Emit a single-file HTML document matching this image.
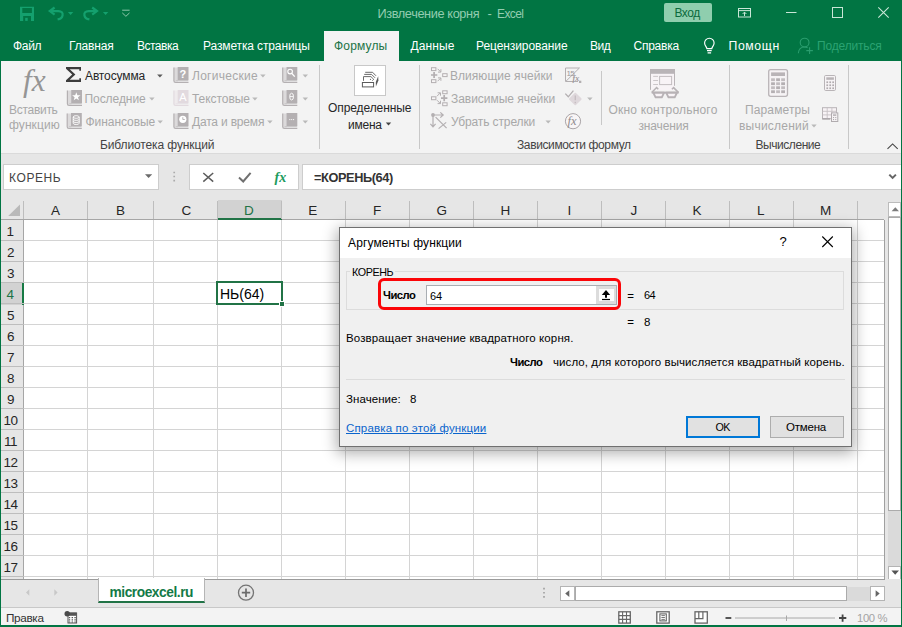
<!DOCTYPE html>
<html lang="ru"><head><meta charset="utf-8"><title>Извлечение корня - Excel</title>
<style>
html,body{margin:0;padding:0}
body{width:902px;height:627px;position:relative;overflow:hidden;background:#fff;font-family:"Liberation Sans",sans-serif}
.r{position:absolute;box-sizing:border-box}
.t{position:absolute;white-space:pre;line-height:30px}
svg{position:absolute;overflow:visible}

</style></head><body>
<div class="r" style="left:0px;top:0px;width:902px;height:61px;background:#017543;"></div>
<div class="r" style="left:664px;top:3px;width:48px;height:19px;background:#8fceae;border-radius:2px;"></div>
<div class="r" style="left:323.5px;top:31px;width:75.0px;height:30px;background:#f3f3f3;"></div>
<div class="r" style="left:0px;top:61px;width:902px;height:92px;background:#f3f3f3;"></div>
<div class="r" style="left:0px;top:153px;width:902px;height:47px;background:#e6e6e6;border-top:1px solid #dadada;"></div>
<div class="r" style="left:319px;top:65px;width:1px;height:84px;background:#c8c8c8;"></div>
<div class="r" style="left:419px;top:65px;width:1px;height:84px;background:#c8c8c8;"></div>
<div class="r" style="left:601px;top:71px;width:1px;height:54px;background:#c8c8c8;"></div>
<div class="r" style="left:729px;top:65px;width:1px;height:84px;background:#c8c8c8;"></div>
<div class="r" style="left:848px;top:65px;width:1px;height:84px;background:#c8c8c8;"></div>
<div class="r" style="left:354.2px;top:65px;width:31.600000000000023px;height:30.700000000000003px;background:#fff;border:1px solid #c8c8c8;"></div>
<div class="r" style="left:3px;top:164px;width:155.6px;height:25.5px;background:#fff;border:1px solid #cdcdcd;"></div>
<div class="r" style="left:189px;top:164px;width:110px;height:25.5px;background:#fff;border:1px solid #cdcdcd;"></div>
<div class="r" style="left:302.4px;top:164px;width:598.6px;height:25.5px;background:#fff;border:1px solid #cdcdcd;border-right:none;"></div>
<div class="r" style="left:0px;top:200px;width:902px;height:20px;background:#e6e6e6;"></div>
<div class="r" style="left:1px;top:219px;width:884px;height:1px;background:#a6a6a6;"></div>
<div class="r" style="left:217.5px;top:200px;width:64.0px;height:19.5px;background:#d2d2d2;border-bottom:2px solid #217346;"></div>
<div class="r" style="left:23px;top:201px;width:1px;height:18px;background:#bdbdbd;"></div>
<div class="r" style="left:87px;top:201px;width:1px;height:18px;background:#bdbdbd;"></div>
<div class="r" style="left:153px;top:201px;width:1px;height:18px;background:#bdbdbd;"></div>
<div class="r" style="left:217px;top:201px;width:1px;height:18px;background:#bdbdbd;"></div>
<div class="r" style="left:281px;top:201px;width:1px;height:18px;background:#bdbdbd;"></div>
<div class="r" style="left:345px;top:201px;width:1px;height:18px;background:#bdbdbd;"></div>
<div class="r" style="left:409px;top:201px;width:1px;height:18px;background:#bdbdbd;"></div>
<div class="r" style="left:473px;top:201px;width:1px;height:18px;background:#bdbdbd;"></div>
<div class="r" style="left:537px;top:201px;width:1px;height:18px;background:#bdbdbd;"></div>
<div class="r" style="left:601px;top:201px;width:1px;height:18px;background:#bdbdbd;"></div>
<div class="r" style="left:665px;top:201px;width:1px;height:18px;background:#bdbdbd;"></div>
<div class="r" style="left:729px;top:201px;width:1px;height:18px;background:#bdbdbd;"></div>
<div class="r" style="left:793px;top:201px;width:1px;height:18px;background:#bdbdbd;"></div>
<div class="r" style="left:857px;top:201px;width:1px;height:18px;background:#bdbdbd;"></div>
<div class="r" style="left:1px;top:220px;width:23px;height:359px;background:#e6e6e6;border-right:1px solid #a6a6a6;"></div>
<div class="r" style="left:1px;top:282.5px;width:23px;height:22.0px;background:#d2d2d2;border-right:2px solid #177a45;"></div>
<div class="r" style="left:87px;top:220px;width:1px;height:359px;background:#d4d4d4;"></div>
<div class="r" style="left:153px;top:220px;width:1px;height:359px;background:#d4d4d4;"></div>
<div class="r" style="left:217px;top:220px;width:1px;height:359px;background:#d4d4d4;"></div>
<div class="r" style="left:281px;top:220px;width:1px;height:359px;background:#d4d4d4;"></div>
<div class="r" style="left:345px;top:220px;width:1px;height:359px;background:#d4d4d4;"></div>
<div class="r" style="left:409px;top:220px;width:1px;height:359px;background:#d4d4d4;"></div>
<div class="r" style="left:473px;top:220px;width:1px;height:359px;background:#d4d4d4;"></div>
<div class="r" style="left:537px;top:220px;width:1px;height:359px;background:#d4d4d4;"></div>
<div class="r" style="left:601px;top:220px;width:1px;height:359px;background:#d4d4d4;"></div>
<div class="r" style="left:665px;top:220px;width:1px;height:359px;background:#d4d4d4;"></div>
<div class="r" style="left:729px;top:220px;width:1px;height:359px;background:#d4d4d4;"></div>
<div class="r" style="left:793px;top:220px;width:1px;height:359px;background:#d4d4d4;"></div>
<div class="r" style="left:857px;top:220px;width:1px;height:359px;background:#d4d4d4;"></div>
<div class="r" style="left:1px;top:240px;width:23px;height:1px;background:#bdbdbd;"></div>
<div class="r" style="left:24px;top:240px;width:860px;height:1px;background:#d4d4d4;"></div>
<div class="r" style="left:1px;top:261px;width:23px;height:1px;background:#bdbdbd;"></div>
<div class="r" style="left:24px;top:261px;width:860px;height:1px;background:#d4d4d4;"></div>
<div class="r" style="left:1px;top:282px;width:23px;height:1px;background:#bdbdbd;"></div>
<div class="r" style="left:24px;top:282px;width:860px;height:1px;background:#d4d4d4;"></div>
<div class="r" style="left:1px;top:303px;width:23px;height:1px;background:#bdbdbd;"></div>
<div class="r" style="left:24px;top:303px;width:860px;height:1px;background:#d4d4d4;"></div>
<div class="r" style="left:1px;top:324px;width:23px;height:1px;background:#bdbdbd;"></div>
<div class="r" style="left:24px;top:324px;width:860px;height:1px;background:#d4d4d4;"></div>
<div class="r" style="left:1px;top:345px;width:23px;height:1px;background:#bdbdbd;"></div>
<div class="r" style="left:24px;top:345px;width:860px;height:1px;background:#d4d4d4;"></div>
<div class="r" style="left:1px;top:366px;width:23px;height:1px;background:#bdbdbd;"></div>
<div class="r" style="left:24px;top:366px;width:860px;height:1px;background:#d4d4d4;"></div>
<div class="r" style="left:1px;top:387px;width:23px;height:1px;background:#bdbdbd;"></div>
<div class="r" style="left:24px;top:387px;width:860px;height:1px;background:#d4d4d4;"></div>
<div class="r" style="left:1px;top:408px;width:23px;height:1px;background:#bdbdbd;"></div>
<div class="r" style="left:24px;top:408px;width:860px;height:1px;background:#d4d4d4;"></div>
<div class="r" style="left:1px;top:429px;width:23px;height:1px;background:#bdbdbd;"></div>
<div class="r" style="left:24px;top:429px;width:860px;height:1px;background:#d4d4d4;"></div>
<div class="r" style="left:1px;top:450px;width:23px;height:1px;background:#bdbdbd;"></div>
<div class="r" style="left:24px;top:450px;width:860px;height:1px;background:#d4d4d4;"></div>
<div class="r" style="left:1px;top:471px;width:23px;height:1px;background:#bdbdbd;"></div>
<div class="r" style="left:24px;top:471px;width:860px;height:1px;background:#d4d4d4;"></div>
<div class="r" style="left:1px;top:492px;width:23px;height:1px;background:#bdbdbd;"></div>
<div class="r" style="left:24px;top:492px;width:860px;height:1px;background:#d4d4d4;"></div>
<div class="r" style="left:1px;top:513px;width:23px;height:1px;background:#bdbdbd;"></div>
<div class="r" style="left:24px;top:513px;width:860px;height:1px;background:#d4d4d4;"></div>
<div class="r" style="left:1px;top:534px;width:23px;height:1px;background:#bdbdbd;"></div>
<div class="r" style="left:24px;top:534px;width:860px;height:1px;background:#d4d4d4;"></div>
<div class="r" style="left:1px;top:555px;width:23px;height:1px;background:#bdbdbd;"></div>
<div class="r" style="left:24px;top:555px;width:860px;height:1px;background:#d4d4d4;"></div>
<div class="r" style="left:1px;top:576px;width:23px;height:1px;background:#bdbdbd;"></div>
<div class="r" style="left:24px;top:576px;width:860px;height:1px;background:#d4d4d4;"></div>
<div class="r" style="left:216px;top:281px;width:67px;height:24px;border:2px solid #217346;background:#fff;"></div>
<div class="r" style="left:279px;top:301px;width:6px;height:6px;background:#217346;border:1px solid #fff;"></div>
<div class="r" style="left:884px;top:200px;width:18px;height:379px;background:#e6e6e6;"></div>
<div class="r" style="left:884px;top:220px;width:1px;height:359px;background:#a0a0a0;"></div>
<div class="r" style="left:888px;top:202px;width:13px;height:14.5px;background:#fff;border:1px solid #bcbcbc;"></div>
<div class="r" style="left:888px;top:217px;width:13px;height:294px;background:#fff;border:1px solid #ababab;"></div>
<div class="r" style="left:888px;top:511px;width:13px;height:54.5px;background:#dadada;"></div>
<div class="r" style="left:888px;top:565.5px;width:13px;height:14.0px;background:#fff;border:1px solid #b4b4b4;"></div>
<div class="r" style="left:0px;top:579px;width:902px;height:28px;background:#e6e6e6;border-top:1px solid #9b9b9b;"></div>
<div class="r" style="left:885px;top:579px;width:17px;height:1px;background:#e6e6e6;"></div>
<div class="r" style="left:98px;top:578.4px;width:107px;height:25.100000000000023px;background:#fff;border-bottom:2px solid #217346;border-left:1px solid #b5b5b5;border-right:1px solid #b5b5b5;"></div>
<div class="r" style="left:560.3px;top:586.3px;width:14.5px;height:14.400000000000091px;background:#fff;border:1px solid #b4b4b4;"></div>
<div class="r" style="left:575px;top:586.3px;width:272px;height:14.400000000000091px;background:#fff;border:1px solid #ababab;"></div>
<div class="r" style="left:847px;top:587px;width:23px;height:13.5px;background:#dadada;"></div>
<div class="r" style="left:870.2px;top:586.3px;width:14.599999999999909px;height:14.400000000000091px;background:#fff;border:1px solid #b4b4b4;"></div>
<div class="r" style="left:0px;top:607px;width:902px;height:20px;background:#f3f3f3;border-top:1px solid #c8c8c8;"></div>
<div class="r" style="left:0px;top:0px;width:1.3px;height:627px;background:#017543;"></div>
<div class="r" style="left:900.7px;top:0px;width:1.2999999999999545px;height:627px;background:#017543;"></div>
<div class="r" style="left:0px;top:625.2px;width:902px;height:1.7999999999999545px;background:#017543;"></div>
<svg width="902" height="627" viewBox="0 0 902 627" style="left:0;top:0"><path fill-rule="evenodd" d="M20 6.8H34V20.9H20ZM22.3 8.1V13H31.9V8.1ZM23.2 16V20.9H31V16Z" fill="#14a06e"/>
<rect x="25.2" y="17.8" width="2.5" height="3.1" fill="#14a06e"/>
<path d="M54.6 7.5L49.8 11.1L54.6 14.7" fill="none" stroke="#14a06e" stroke-width="2.2"/>
<path d="M50.4 11.1H58.4C61.6 11.1 63 13 62.6 15.2C62.2 17.6 60 19 57.6 19.4" fill="none" stroke="#14a06e" stroke-width="2.2"/>
<path d="M67.9 12.1H73.3L70.6 15Z" fill="#14a06e"/>
<path d="M92.2 7.5L97 11.1L92.2 14.7" fill="none" stroke="#14a06e" stroke-width="2.2"/>
<path d="M96.4 11.1H88.6C85.4 11.1 84 13 84.4 15.2C84.8 17.6 87 19 89.4 19.4" fill="none" stroke="#14a06e" stroke-width="2.2"/>
<path d="M102.9 12.1H108.3L105.6 15Z" fill="#14a06e"/>
<path d="M122.2 10.2H129.6" stroke="#8fc8ab" stroke-width="1" fill="none"/>
<path d="M122.3 12.9L125.9 16.3L129.5 12.9" stroke="#8fc8ab" stroke-width="1" fill="none"/>
<rect x="738.5" y="8.5" width="12" height="8.5" fill="none" stroke="#c9e6d7" stroke-width="1"/>
<path d="M738.5 10.6H750.5" stroke="#c9e6d7" stroke-width="1"/>
<path d="M744.5 16V12.2M742.6 14L744.5 12.1L746.4 14" stroke="#c9e6d7" stroke-width="1" fill="none"/>
<path d="M786 12.5H796.5" stroke="#c9e6d7" stroke-width="1"/>
<rect x="832.5" y="7.5" width="10" height="10" fill="none" stroke="#c9e6d7" stroke-width="1"/>
<path d="M878.3 7.3L888.7 17.7M888.7 7.3L878.3 17.7" stroke="#c9e6d7" stroke-width="1.1"/>
<path d="M706.9 48.6C706.6 46.6 704.6 45.6 704.6 43A4.75 4.75 0 0 1 714.1 43C714.1 45.6 712.1 46.6 711.8 48.6Z" fill="none" stroke="#fff" stroke-width="1.15"/>
<path d="M707 50.7H711.7M707.6 52.9H711.1" stroke="#fff" stroke-width="1.2"/>
<circle cx="804.6" cy="42.6" r="4.4" fill="none" stroke="#2a9d6e" stroke-width="1.1"/>
<path d="M798.3 53.3C798.6 49.3 801.3 47 804.6 47C806 47 807 47.4 807.6 47.8" fill="none" stroke="#2a9d6e" stroke-width="1.1"/>
<path d="M806.3 50.6H812.9M809.6 47.3V53.9" stroke="#2a9d6e" stroke-width="1.1"/>
<path d="M66 67H81V70.7H79.3V69.2H69.7L75.4 74.5L69.7 79.8H79.3V78.3H81V82H66V80.2L72.2 74.5L66 68.8Z" fill="#3c3c3c"/>
<path d="M157.1 74.4H162.7L159.9 77.5Z" fill="#5a5a5a"/>
<path d="M149.2 97.6H154.6L151.89999999999998 100.5Z" fill="#b9b9b9"/>
<path d="M157.5 120.6H162.9L160.2 123.5Z" fill="#b9b9b9"/>
<path d="M260.2 74.6H265.59999999999997L262.9 77.5Z" fill="#b9b9b9"/>
<path d="M252.2 97.6H257.59999999999997L254.89999999999998 100.5Z" fill="#b9b9b9"/>
<path d="M267.2 120.6H272.59999999999997L269.9 123.5Z" fill="#b9b9b9"/>
<path d="M302.6 74.6H308.0L305.3 77.5Z" fill="#b9b9b9"/>
<path d="M302.6 97.6H308.0L305.3 100.5Z" fill="#b9b9b9"/>
<path d="M302.6 120.6H308.0L305.3 123.5Z" fill="#b9b9b9"/>
<path d="M545.5 120.6H550.9L548.2 123.5Z" fill="#b9b9b9"/>
<path d="M587.2 97.6H592.6L589.9000000000001 100.5Z" fill="#b9b9b9"/>
<path d="M385.8 122.6H391.2L388.5 125.5Z" fill="#444"/>
<path d="M811.3 124.6H816.6999999999999L814.0 127.5Z" fill="#b9b9b9"/>
<rect x="67.5" y="90.5" width="4" height="14" fill="#dcdadb"/>
<path d="M67.4 90.6V103.8Q67.4 105.4 69.1 105.4H82.0" fill="none" stroke="#b4b0b2" stroke-width="1.2"/>
<path d="M69.3 103.6H81.5" fill="none" stroke="#b4b0b2" stroke-width="0.8" opacity="0.6"/>
<rect x="71.2" y="90" width="10.8" height="13.4" fill="#b4b0b2"/>
<path d="M76.3 92.3L77.4 95.3H80.5L78 97.2L78.9 100.3L76.3 98.4L73.7 100.3L74.6 97.2L72.1 95.3H75.2Z" fill="#fff"/>
<rect x="67.3" y="113.5" width="4" height="14" fill="#dcdadb"/>
<path d="M67.2 113.6V126.8Q67.2 128.4 68.89999999999999 128.4H81.8" fill="none" stroke="#b4b0b2" stroke-width="1.2"/>
<path d="M69.1 126.6H81.3" fill="none" stroke="#b4b0b2" stroke-width="0.8" opacity="0.6"/>
<rect x="71.0" y="113" width="10.8" height="13.4" fill="#b4b0b2"/>
<g fill="none" stroke="#fff" stroke-width="0.9"><ellipse cx="76.2" cy="117" rx="3" ry="1.3"/><path d="M73.2 117V123.2A3 1.3 0 0 0 79.2 123.2V117M73.2 119.1A3 1.3 0 0 0 79.2 119.1M73.2 121.2A3 1.3 0 0 0 79.2 121.2"/></g>
<rect x="174" y="67.5" width="4" height="14" fill="#dcdadb"/>
<path d="M173.9 67.6V80.8Q173.9 82.4 175.6 82.4H188.5" fill="none" stroke="#b4b0b2" stroke-width="1.2"/>
<path d="M175.8 80.6H188" fill="none" stroke="#b4b0b2" stroke-width="0.8" opacity="0.6"/>
<rect x="177.7" y="67" width="10.8" height="13.4" fill="#b4b0b2"/>
<text x="182.8" y="78.2" font-family="Liberation Sans, sans-serif" font-size="11" font-weight="700" fill="#fff" text-anchor="middle">?</text>
<rect x="174" y="90.5" width="4" height="14" fill="#efebed"/>
<path d="M173.9 90.6V103.8Q173.9 105.4 175.6 105.4H188.5" fill="none" stroke="#e2dadf" stroke-width="1.2"/>
<path d="M175.8 103.6H188" fill="none" stroke="#e2dadf" stroke-width="0.8" opacity="0.6"/>
<rect x="177.7" y="90" width="10.8" height="13.4" fill="#e2dadf"/>
<text x="182.8" y="101.3" font-family="Liberation Sans, sans-serif" font-size="11" fill="#fff" text-anchor="middle">A</text>
<rect x="174" y="113.5" width="4" height="14" fill="#dcdadb"/>
<path d="M173.9 113.6V126.8Q173.9 128.4 175.6 128.4H188.5" fill="none" stroke="#b4b0b2" stroke-width="1.2"/>
<path d="M175.8 126.6H188" fill="none" stroke="#b4b0b2" stroke-width="0.8" opacity="0.6"/>
<rect x="177.7" y="113" width="10.8" height="13.4" fill="#b4b0b2"/>
<circle cx="182.8" cy="119.3" r="3.6" fill="#fff"/><path d="M182.8 117.2V119.5H184.8" stroke="#b4b0b2" stroke-width="0.9" fill="none"/>
<rect x="282.8" y="67.5" width="4" height="14" fill="#dcdadb"/>
<path d="M282.7 67.6V80.8Q282.7 82.4 284.40000000000003 82.4H297.3" fill="none" stroke="#b4b0b2" stroke-width="1.2"/>
<path d="M284.6 80.6H296.8" fill="none" stroke="#b4b0b2" stroke-width="0.8" opacity="0.6"/>
<rect x="286.5" y="67" width="10.8" height="13.4" fill="#b4b0b2"/>
<circle cx="290.1" cy="71.6" r="2.3" fill="none" stroke="#fff" stroke-width="1.1"/><path d="M291.8 73.4L294.7 76.6" stroke="#fff" stroke-width="1.4"/>
<rect x="282.8" y="90.5" width="4" height="14" fill="#dcdadb"/>
<path d="M282.7 90.6V103.8Q282.7 105.4 284.40000000000003 105.4H297.3" fill="none" stroke="#b4b0b2" stroke-width="1.2"/>
<path d="M284.6 103.6H296.8" fill="none" stroke="#b4b0b2" stroke-width="0.8" opacity="0.6"/>
<rect x="286.5" y="90" width="10.8" height="13.4" fill="#b4b0b2"/>
<ellipse cx="291.6" cy="96.6" rx="1.9" ry="3.4" fill="none" stroke="#fff" stroke-width="0.9"/><path d="M289.9 96.6H293.3" stroke="#fff" stroke-width="0.9"/>
<rect x="282.8" y="113.5" width="4" height="14" fill="#dcdadb"/>
<path d="M282.7 113.6V126.8Q282.7 128.4 284.40000000000003 128.4H297.3" fill="none" stroke="#b4b0b2" stroke-width="1.2"/>
<path d="M284.6 126.6H296.8" fill="none" stroke="#b4b0b2" stroke-width="0.8" opacity="0.6"/>
<rect x="286.5" y="113" width="10.8" height="13.4" fill="#b4b0b2"/>
<path d="M289.3 119.6H290.3M291.2 119.6H292.2M293.1 119.6H294.1" stroke="#fff" stroke-width="1"/>
<rect x="362.4" y="82.5" width="11.2" height="4.4" fill="none" stroke="#5a5a5a" stroke-width="1"/>
<path d="M365.2 72.3H372.6L376 75.8M364.2 74.4H371.6L375 77.8M363.5 80.8V76.6H370.9L373.7 79.3L372.4 80.7" fill="none" stroke="#5a5a5a" stroke-width="0.9"/>
<circle cx="370.5" cy="79.3" r="0.6" fill="#5a5a5a"/>
<path d="M378.2 76.2L378.4 80.5L375.9 86.6L375.8 82Z" fill="#5a5a5a"/>
<rect x="431.5" y="67.7" width="4.4" height="2.9" fill="#f7f5f6" stroke="#b3afb1" stroke-width="1"/>
<rect x="431.5" y="79.7" width="4.4" height="2.9" fill="#f7f5f6" stroke="#b3afb1" stroke-width="1"/>
<rect x="442.7" y="73.7" width="4.4" height="2.9" fill="#f7f5f6" stroke="#b3afb1" stroke-width="1"/>
<path d="M431 75H437.3M434.1 71.9V78.1" stroke="#b3afb1" stroke-width="1.7"/>
<path d="M437.6 68.8L440.6 71.8M440.9 69.2V72.1H438M437.6 81.2L440.6 78.2M440.9 80.8V77.9H438" stroke="#b3afb1" stroke-width="1" fill="none"/>
<rect x="431.5" y="96.8" width="4.4" height="2.9" fill="#f7f5f6" stroke="#b3afb1" stroke-width="1"/>
<rect x="442.7" y="90.8" width="4.4" height="2.9" fill="#f7f5f6" stroke="#b3afb1" stroke-width="1"/>
<rect x="442.7" y="102.8" width="4.4" height="2.9" fill="#f7f5f6" stroke="#b3afb1" stroke-width="1"/>
<path d="M441 98.2H447.4M444.2 95.1V101.3" stroke="#b3afb1" stroke-width="1.7"/>
<path d="M437 96.2L440.2 93M437.6 92.8H440.5V95.7M437 100.2L440.2 103.4M437.6 103.6H440.5V100.7" stroke="#b3afb1" stroke-width="1" fill="none"/>
<circle cx="433" cy="115" r="1.9" fill="#b3afb1"/>
<path d="M433 115V126.6M430.4 123.8L433 126.8L435.6 123.8M433 115H443M440.3 112.4L443.2 115L440.3 117.6" stroke="#b3afb1" stroke-width="1.2" fill="none"/>
<path d="M435.6 117.2L446.6 128.2M446.2 122.4L438.6 128.6" stroke="#b3afb1" stroke-width="1.2" fill="none"/>
<path d="M579.3 68H565.5V81.5H578" fill="none" stroke="#b3afb1" stroke-width="1"/>
<path d="M566 81.2L579.6 67.8" stroke="#b3afb1" stroke-width="1"/>
<text x="566.4" y="75.6" font-family="Liberation Sans, sans-serif" font-size="8" fill="#9d989b" letter-spacing="-0.7">15</text>
<text x="572.6" y="81" font-family="Liberation Serif, serif" font-style="italic" font-weight="700" font-size="8" fill="#9d989b">fx</text>
<rect x="579" y="80.7" width="2.3" height="2.3" fill="#b3afb1"/>
<path d="M565.3 93.6L568.3 96.8L573.4 90.6" stroke="#b3afb1" stroke-width="1.3" fill="none"/>
<path d="M575.3 93.6L580.7 99L575.3 104.4L569.9 99Z" fill="#dfd8dc" stroke="#dfd8dc" stroke-width="1.8" stroke-linejoin="round"/>
<path d="M575.3 95.4V100.2M575.3 101.8V103.2" stroke="#c6bec2" stroke-width="1.4"/>
<circle cx="573" cy="121.2" r="7.6" fill="#f8f5f6" stroke="#aaa5a8" stroke-width="1"/>
<text x="567.6" y="125.2" font-family="Liberation Serif, serif" font-style="italic" font-size="12.5" fill="#8f8a8d">fx</text>
<path d="M650.5 90V69.4H674.6V85.8" fill="#f8f3f6" stroke="none"/>
<rect x="650.5" y="73.7" width="24" height="16.5" fill="#f8f3f6"/>
<rect x="650" y="69" width="25" height="4.8" fill="#b9b4b7"/>
<path d="M650.5 69.5V89.8M674.5 69.5V85.8" stroke="#b9b4b7" stroke-width="1"/>
<path d="M653.2 76.4H658M653.2 80.5H658M653.2 84.5H658" stroke="#c6c1c4" stroke-width="0.9"/>
<rect x="659.6" y="76.4" width="12" height="8.2" fill="none" stroke="#c2bdc0" stroke-width="1"/>
<path d="M658.3 89.2L656.6 87.6L651.7 92.6M671.9 89.2L673.6 87.6L678.6 92.6" fill="none" stroke="#b7b2b5" stroke-width="1.5"/>
<path d="M651.7 92.6H678.6" stroke="#b7b2b5" stroke-width="2"/>
<path d="M653.4 92.8L655.6 97.3H661.8L664 92.8ZM666.3 92.8L668.5 97.3H674.7L676.9 92.8Z" fill="#f8f3f6" stroke="#b7b2b5" stroke-width="1.9" stroke-linejoin="round"/>
<rect x="768.7" y="69.7" width="18.8" height="26.6" rx="2" fill="#f6f3f5" stroke="#b9b4b7" stroke-width="1.3"/>
<rect x="771.1" y="72.4" width="13.9" height="3.6" fill="#b9b4b7"/>
<rect x="771.10" y="78.30" width="3.8" height="2.8" fill="#c1bcbf"/>
<rect x="776.15" y="78.30" width="3.8" height="2.8" fill="#b4afb2"/>
<rect x="781.20" y="78.30" width="3.8" height="2.8" fill="#c1bcbf"/>
<rect x="771.10" y="82.30" width="3.8" height="2.8" fill="#b4afb2"/>
<rect x="776.15" y="82.30" width="3.8" height="2.8" fill="#c1bcbf"/>
<rect x="781.20" y="82.30" width="3.8" height="2.8" fill="#b4afb2"/>
<rect x="771.10" y="86.30" width="3.8" height="2.8" fill="#c1bcbf"/>
<rect x="776.15" y="86.30" width="3.8" height="2.8" fill="#b4afb2"/>
<rect x="781.20" y="86.30" width="3.8" height="2.8" fill="#c1bcbf"/>
<rect x="771.10" y="90.30" width="3.8" height="2.8" fill="#b4afb2"/>
<rect x="776.15" y="90.30" width="3.8" height="2.8" fill="#c1bcbf"/>
<rect x="781.20" y="90.30" width="3.8" height="2.8" fill="#b4afb2"/>
<rect x="824.5" y="75.5" width="11" height="15" rx="1.2" fill="#f6f3f5" stroke="#b9b4b7" stroke-width="1"/>
<rect x="826.3" y="77.3" width="7.6" height="2.5" fill="#b9b4b7"/>
<rect x="826.40" y="81.40" width="1.7" height="1.7" fill="#b0abae"/>
<rect x="829.35" y="81.40" width="1.7" height="1.7" fill="#b0abae"/>
<rect x="832.30" y="81.40" width="1.7" height="1.7" fill="#b0abae"/>
<rect x="826.40" y="84.40" width="1.7" height="1.7" fill="#b0abae"/>
<rect x="829.35" y="84.40" width="1.7" height="1.7" fill="#b0abae"/>
<rect x="832.30" y="84.40" width="1.7" height="1.7" fill="#b0abae"/>
<rect x="826.40" y="87.40" width="1.7" height="1.7" fill="#b0abae"/>
<rect x="829.35" y="87.40" width="1.7" height="1.7" fill="#b0abae"/>
<rect x="832.30" y="87.40" width="1.7" height="1.7" fill="#b0abae"/>
<rect x="822.5" y="107.7" width="14" height="11" fill="#f8f3f6" stroke="#b9b4b7" stroke-width="1"/>
<path d="M822.5 111.3H836.5M822.5 114.9H836.5M827.2 107.7V118.7M831.9 107.7V118.7" stroke="#c6c1c4" stroke-width="0.9"/>
<path d="M822.3 118.9H830" stroke="#a9a4a7" stroke-width="1.4"/>
<rect x="831.5" y="112.9" width="6.3" height="8.6" fill="#f6f3f5" stroke="#b0abae" stroke-width="1"/>
<rect x="833" y="114.4" width="3.3" height="1.4" fill="#b0abae"/>
<rect x="833.00" y="117.00" width="1.1" height="1.1" fill="#b0abae"/>
<rect x="835.20" y="117.00" width="1.1" height="1.1" fill="#b0abae"/>
<rect x="833.00" y="119.00" width="1.1" height="1.1" fill="#b0abae"/>
<rect x="835.20" y="119.00" width="1.1" height="1.1" fill="#b0abae"/>
<path d="M887.5 148.9L892.6 143.9L897.7 148.9" fill="none" stroke="#444" stroke-width="1.1"/>
<path d="M145 174.3H152.2L148.6 178Z" fill="#6a6a6a"/>
<path d="M174.2 171.7V173.3M174.2 175.7V177.3M174.2 179.8V181.4" stroke="#ababab" stroke-width="1.7"/>
<path d="M203.3 173L213.2 181.6M213.2 173L203.3 181.6" stroke="#5c5c5c" stroke-width="1.5"/>
<path d="M239 177.6L243.2 181.5L250.6 172.8" stroke="#707070" stroke-width="2" fill="none"/>
<text x="274.6" y="181.6" font-family="Liberation Serif, serif" font-style="italic" font-weight="700" font-size="14" fill="#1b9a5d">fx</text>
<path d="M889.3 174.6L892.6 177.9L895.9 174.6" fill="none" stroke="#666" stroke-width="2"/>
<path d="M20 204.5V216H8.2Z" fill="#b9b9b9"/>
<path d="M891.6 211.2L895.3 207.2L899 211.2Z" fill="#7c7c7c"/>
<path d="M891.4 570.6L895.2 574.7L899 570.6Z" fill="#555"/>
<path d="M569.3 590.2L565.2 593.6L569.3 597Z" fill="#666"/>
<path d="M875.6 590.2L879.7 593.6L875.6 597Z" fill="#666"/>
<path d="M544 587.8V589.5M544 591.9V593.6M544 596V597.7" stroke="#a6a6a6" stroke-width="1.8"/>
<path d="M29.3 589.2L26 592.5L29.3 595.8Z" fill="#c8c8c8"/>
<path d="M54.3 589.2L57.6 592.5L54.3 595.8Z" fill="#c8c8c8"/>
<circle cx="246" cy="592.7" r="7.5" fill="none" stroke="#747474" stroke-width="1.3"/>
<path d="M241.8 592.7H250.2M246 588.5V596.9" stroke="#6b6b6b" stroke-width="1.7"/>
<rect x="68" y="613" width="8.6" height="10" fill="#fff" stroke="#555" stroke-width="1"/>
<rect x="68" y="612.6" width="8.6" height="3.2" fill="#555"/>
<path d="M69.5 617V618.3M72.3 617V618.3M75.1 617V618.3M69.5 619.3V620.6M72.3 619.3V620.6M75.1 619.3V620.6M69.5 621.4V622.5M72.3 621.4V622.5M75.1 621.4V622.5" stroke="#555" stroke-width="1.4"/>
<circle cx="67.2" cy="613.7" r="2.7" fill="#4a4a4a"/>
<rect x="618.8" y="611.8" width="11.5" height="11.3" fill="#fff" stroke="#666" stroke-width="1.3"/><path d="M618.8 615.6H630.3M618.8 619.4H630.3M622.6 611.8V623.1M626.5 611.8V623.1" stroke="#666" stroke-width="1.1"/>
<rect x="656.8" y="611.8" width="12.4" height="11.3" fill="#fff" stroke="#666" stroke-width="1.3"/><rect x="659.9" y="613.9" width="6.4" height="7" fill="none" stroke="#666" stroke-width="1.1"/><path d="M661.4 615.6H664.9M661.4 617.5H664.9M661.4 619.4H664.9" stroke="#666" stroke-width="0.9"/>
<rect x="695" y="611.8" width="12.3" height="11.3" fill="#fff" stroke="#666" stroke-width="1.3"/><path d="M698.8 611.8V618.7M702.9 611.8V618.7M695 618.7H703.5" fill="none" stroke="#666" stroke-width="1.2"/>
<path d="M725.5 618H731.3" stroke="#444" stroke-width="1.8"/>
<path d="M735 618H835" stroke="#a8a8a8" stroke-width="1"/>
<path d="M786.5 615.5V621" stroke="#a8a8a8" stroke-width="1"/>
<path d="M839 618H846.3M842.6 614.4V621.7" stroke="#444" stroke-width="1.8"/></svg>
<div class="r" style="left:339px;top:227px;width:513px;height:220px;background:#f0f0f0;border:1px solid #707070;box-shadow:0 4px 14px 2px rgba(0,0,0,0.33);"></div>
<div class="r" style="left:340px;top:228px;width:511px;height:30px;background:#fff;"></div>
<div class="r" style="left:346px;top:271px;width:498px;height:38.5px;border:1px solid #dcdcdc;"></div>
<div class="r" style="left:350px;top:265px;width:45px;height:14px;background:#f0f0f0;"></div>
<div class="r" style="left:425.5px;top:285px;width:191.89999999999998px;height:19.5px;background:#fff;border:1px solid #a9aeb3;"></div>
<div class="r" style="left:596.3px;top:286px;width:20.200000000000045px;height:18px;background:#dcdcdc;"></div>
<div class="r" style="left:598.8px;top:288.8px;width:15.400000000000091px;height:12.199999999999989px;background:#fcfcfc;"></div>
<div class="r" style="left:378px;top:278px;width:243.20000000000005px;height:32px;border:3.2px solid #fb0508;border-radius:6px;"></div>
<div class="r" style="left:346px;top:379px;width:499px;height:1px;background:#dcdcdc;"></div>
<div class="r" style="left:686px;top:416px;width:74px;height:22px;background:#e1e1e1;border:2px solid #0078d7;"></div>
<div class="r" style="left:769.5px;top:416px;width:74.5px;height:22px;background:#e1e1e1;border:1px solid #adadad;"></div>
<svg width="902" height="627" viewBox="0 0 902 627" style="left:0;top:0"><path d="M822.3 236.5L832.8 247M832.8 236.5L822.3 247" stroke="#000" stroke-width="1.1"/>
<path d="M606 291.5V297.7" stroke="#000" stroke-width="2"/>
<path d="M601.8 294.9L606 289.9L610.2 294.9Z" fill="#000"/>
<path d="M602 299.5H610" stroke="#000" stroke-width="1.2"/></svg>
<span class="t" style="left:377.50px;top:-1.00px;font-size:12.75px;color:#93ccb0;letter-spacing:-0.393px;">Извлечение корня</span>
<span class="t" style="left:487.50px;top:-1.00px;font-size:13px;color:#93ccb0;">-</span>
<span class="t" style="left:497.00px;top:-1.00px;font-size:12.0px;color:#93ccb0;letter-spacing:-0.600px;">Excel</span>
<span class="t" style="left:674.50px;top:-2.50px;font-size:12px;color:#0b6a3c;letter-spacing:-0.500px;">Вход</span>
<span class="t" style="left:13.00px;top:31.00px;font-size:12px;color:#ffffff;letter-spacing:-0.333px;">Файл</span>
<span class="t" style="left:69.00px;top:31.00px;font-size:12px;color:#ffffff;letter-spacing:-0.167px;">Главная</span>
<span class="t" style="left:137.00px;top:31.00px;font-size:12px;color:#ffffff;letter-spacing:-0.500px;">Вставка</span>
<span class="t" style="left:203.00px;top:31.00px;font-size:12px;color:#ffffff;letter-spacing:-0.125px;">Разметка страницы</span>
<span class="t" style="left:410.50px;top:31.00px;font-size:12px;color:#ffffff;letter-spacing:0.100px;">Данные</span>
<span class="t" style="left:476.00px;top:31.00px;font-size:12px;color:#ffffff;letter-spacing:-0.077px;">Рецензирование</span>
<span class="t" style="left:590.00px;top:31.00px;font-size:12px;color:#ffffff;letter-spacing:-0.500px;">Вид</span>
<span class="t" style="left:633.50px;top:31.00px;font-size:12px;color:#ffffff;letter-spacing:-0.250px;">Справка</span>
<span class="t" style="left:728.50px;top:31.00px;font-size:12.25px;color:#ffffff;letter-spacing:0.600px;">Помощн</span>
<span class="t" style="left:334.00px;top:31.00px;font-size:12px;color:#217346;letter-spacing:0.167px;">Формулы</span>
<span class="t" style="left:817.00px;top:31.00px;font-size:12px;color:#2ba372;letter-spacing:-0.167px;">Поделиться</span>
<span class="t" style="left:23.00px;top:65.50px;font-size:31.25px;color:#959595;font-style:italic;font-family:'Liberation Serif', serif;">fx</span>
<span class="t" style="left:9.00px;top:95.00px;font-size:12px;color:#a8a8a8;letter-spacing:-0.286px;">Вставить</span>
<span class="t" style="left:9.00px;top:110.00px;font-size:12px;color:#a8a8a8;letter-spacing:0.083px;">функцию</span>
<span class="t" style="left:85.00px;top:61.00px;font-size:12px;color:#262626;letter-spacing:-0.125px;">Автосумма</span>
<span class="t" style="left:84.50px;top:84.00px;font-size:12px;color:#a8a8a8;letter-spacing:-0.062px;">Последние</span>
<span class="t" style="left:85.50px;top:107.00px;font-size:12px;color:#a8a8a8;letter-spacing:-0.056px;">Финансовые</span>
<span class="t" style="left:192.00px;top:61.00px;font-size:12px;color:#a8a8a8;letter-spacing:0.278px;">Логические</span>
<span class="t" style="left:192.00px;top:84.00px;font-size:12px;color:#a8a8a8;letter-spacing:-0.062px;">Текстовые</span>
<span class="t" style="left:192.00px;top:107.00px;font-size:12px;color:#a8a8a8;letter-spacing:-0.182px;">Дата и время</span>
<span class="t" style="left:100.00px;top:129.50px;font-size:12px;color:#444;letter-spacing:-0.118px;">Библиотека функций</span>
<span class="t" style="left:328.00px;top:93.00px;font-size:12px;color:#262626;letter-spacing:-0.091px;">Определенные</span>
<span class="t" style="left:348.00px;top:109.50px;font-size:12px;color:#262626;letter-spacing:-0.250px;">имена</span>
<span class="t" style="left:450.00px;top:61.30px;font-size:12px;color:#a8a8a8;letter-spacing:0.036px;">Влияющие ячейки</span>
<span class="t" style="left:451.00px;top:84.30px;font-size:12px;color:#a8a8a8;letter-spacing:-0.033px;">Зависимые ячейки</span>
<span class="t" style="left:451.00px;top:107.30px;font-size:12px;color:#a8a8a8;letter-spacing:-0.115px;">Убрать стрелки</span>
<span class="t" style="left:517.00px;top:129.50px;font-size:12px;color:#444;letter-spacing:-0.382px;">Зависимости формул</span>
<span class="t" style="left:608.50px;top:95.00px;font-size:12px;color:#a8a8a8;letter-spacing:0.188px;">Окно контрольного</span>
<span class="t" style="left:638.50px;top:111.00px;font-size:12px;color:#a8a8a8;letter-spacing:-0.143px;">значения</span>
<span class="t" style="left:745.00px;top:95.00px;font-size:12px;color:#a8a8a8;letter-spacing:0.125px;">Параметры</span>
<span class="t" style="left:739.00px;top:111.00px;font-size:12px;color:#a8a8a8;letter-spacing:0.222px;">вычислений</span>
<span class="t" style="left:755.50px;top:129.50px;font-size:12px;color:#444;letter-spacing:-0.444px;">Вычисление</span>
<span class="t" style="left:9.00px;top:162.50px;font-size:12px;color:#444;letter-spacing:0.600px;">КОРЕНЬ</span>
<span class="t" style="left:314.00px;top:162.50px;font-size:12.75px;color:#333;letter-spacing:-0.400px;font-weight:700;">=КОРЕНЬ(64)</span>
<span class="t" style="left:51.10px;top:195.50px;font-size:13.5px;color:#262626;">A</span>
<span class="t" style="left:116.00px;top:195.50px;font-size:13.5px;color:#262626;">B</span>
<span class="t" style="left:181.50px;top:195.50px;font-size:13.5px;color:#262626;">C</span>
<span class="t" style="left:244.10px;top:195.50px;font-size:13.5px;color:#217346;">D</span>
<span class="t" style="left:308.20px;top:195.50px;font-size:13.5px;color:#262626;">E</span>
<span class="t" style="left:373.10px;top:195.50px;font-size:13.5px;color:#262626;">F</span>
<span class="t" style="left:436.60px;top:195.50px;font-size:13.5px;color:#262626;">G</span>
<span class="t" style="left:500.60px;top:195.50px;font-size:13.5px;color:#262626;">H</span>
<span class="t" style="left:567.60px;top:195.50px;font-size:13.5px;color:#262626;">I</span>
<span class="t" style="left:630.60px;top:195.50px;font-size:13.5px;color:#262626;">J</span>
<span class="t" style="left:692.60px;top:195.50px;font-size:13.5px;color:#262626;">K</span>
<span class="t" style="left:757.10px;top:195.50px;font-size:13.5px;color:#262626;">L</span>
<span class="t" style="left:820.00px;top:195.50px;font-size:13.5px;color:#262626;">M</span>
<span class="t" style="left:6.50px;top:216.60px;font-size:13.5px;color:#262626;">1</span>
<span class="t" style="left:7.00px;top:237.60px;font-size:13.5px;color:#262626;">2</span>
<span class="t" style="left:7.00px;top:258.60px;font-size:13.5px;color:#262626;">3</span>
<span class="t" style="left:6.50px;top:279.60px;font-size:13.5px;color:#217346;">4</span>
<span class="t" style="left:7.00px;top:300.60px;font-size:13.5px;color:#262626;">5</span>
<span class="t" style="left:7.00px;top:321.60px;font-size:13.5px;color:#262626;">6</span>
<span class="t" style="left:7.00px;top:342.60px;font-size:13.5px;color:#262626;">7</span>
<span class="t" style="left:7.00px;top:363.60px;font-size:13.5px;color:#262626;">8</span>
<span class="t" style="left:7.00px;top:384.60px;font-size:13.5px;color:#262626;">9</span>
<span class="t" style="left:3.60px;top:405.60px;font-size:13.5px;color:#262626;letter-spacing:-0.700px;">10</span>
<span class="t" style="left:4.10px;top:426.60px;font-size:13.5px;color:#262626;letter-spacing:-0.700px;">11</span>
<span class="t" style="left:3.60px;top:447.60px;font-size:13.5px;color:#262626;letter-spacing:-0.700px;">12</span>
<span class="t" style="left:3.60px;top:468.60px;font-size:13.5px;color:#262626;letter-spacing:-0.700px;">13</span>
<span class="t" style="left:3.60px;top:489.60px;font-size:13.5px;color:#262626;letter-spacing:-0.700px;">14</span>
<span class="t" style="left:3.60px;top:510.60px;font-size:13.5px;color:#262626;letter-spacing:-0.700px;">15</span>
<span class="t" style="left:3.60px;top:531.60px;font-size:13.5px;color:#262626;letter-spacing:-0.700px;">16</span>
<span class="t" style="left:3.60px;top:552.60px;font-size:13.5px;color:#262626;letter-spacing:-0.700px;">17</span>
<span class="t" style="left:220.00px;top:279.00px;font-size:14px;color:#000;">НЬ(64)</span>
<span class="t" style="left:348.00px;top:228.00px;font-size:12px;color:#000;letter-spacing:0.125px;">Аргументы функции</span>
<span class="t" style="left:779.50px;top:227.00px;font-size:13px;color:#000;">?</span>
<span class="t" style="left:352.00px;top:257.00px;font-size:10.75px;color:#000;letter-spacing:-0.400px;">КОРЕНЬ</span>
<span class="t" style="left:383.00px;top:280.00px;font-size:11.25px;color:#000;letter-spacing:-0.500px;font-weight:700;">Число</span>
<span class="t" style="left:430.00px;top:281.00px;font-size:11.0px;color:#000;">64</span>
<span class="t" style="left:627.25px;top:280.60px;font-size:11.5px;color:#000;">=</span>
<span class="t" style="left:644.00px;top:280.00px;font-size:11.0px;color:#000;letter-spacing:-0.500px;">64</span>
<span class="t" style="left:627.25px;top:307.00px;font-size:11.5px;color:#000;">=</span>
<span class="t" style="left:644.00px;top:307.00px;font-size:11.5px;color:#000;">8</span>
<span class="t" style="left:346.00px;top:323.00px;font-size:11.5px;color:#000;letter-spacing:0.122px;">Возвращает значение квадратного корня.</span>
<span class="t" style="left:510.00px;top:347.00px;font-size:11.25px;color:#000;letter-spacing:-0.500px;font-weight:700;">Число</span>
<span class="t" style="left:553.00px;top:347.00px;font-size:11.5px;color:#000;letter-spacing:0.082px;">число, для которого вычисляется квадратный корень.</span>
<span class="t" style="left:346.00px;top:384.00px;font-size:11.5px;color:#000;letter-spacing:0.062px;">Значение:</span>
<span class="t" style="left:410.00px;top:384.00px;font-size:11.5px;color:#000;">8</span>
<span class="t" style="left:346.00px;top:413.00px;font-size:11.5px;color:#0a64cc;letter-spacing:0.159px;text-decoration:underline;">Справка по этой функции</span>
<span class="t" style="left:715.50px;top:412.00px;font-size:10.75px;color:#000;letter-spacing:-0.500px;">OK</span>
<span class="t" style="left:786.00px;top:412.00px;font-size:11.5px;color:#000;letter-spacing:-0.200px;">Отмена</span>
<span class="t" style="left:109.50px;top:577.50px;font-size:13.75px;color:#137a47;letter-spacing:-0.458px;font-weight:700;">microexcel.ru</span>
<span class="t" style="left:5.90px;top:602.70px;font-size:11.75px;color:#333;letter-spacing:-0.320px;">Правка</span>
<span class="t" style="left:857.00px;top:602.50px;font-size:11.25px;color:#a3a3a3;letter-spacing:-0.325px;">100 %</span>
</body></html>
